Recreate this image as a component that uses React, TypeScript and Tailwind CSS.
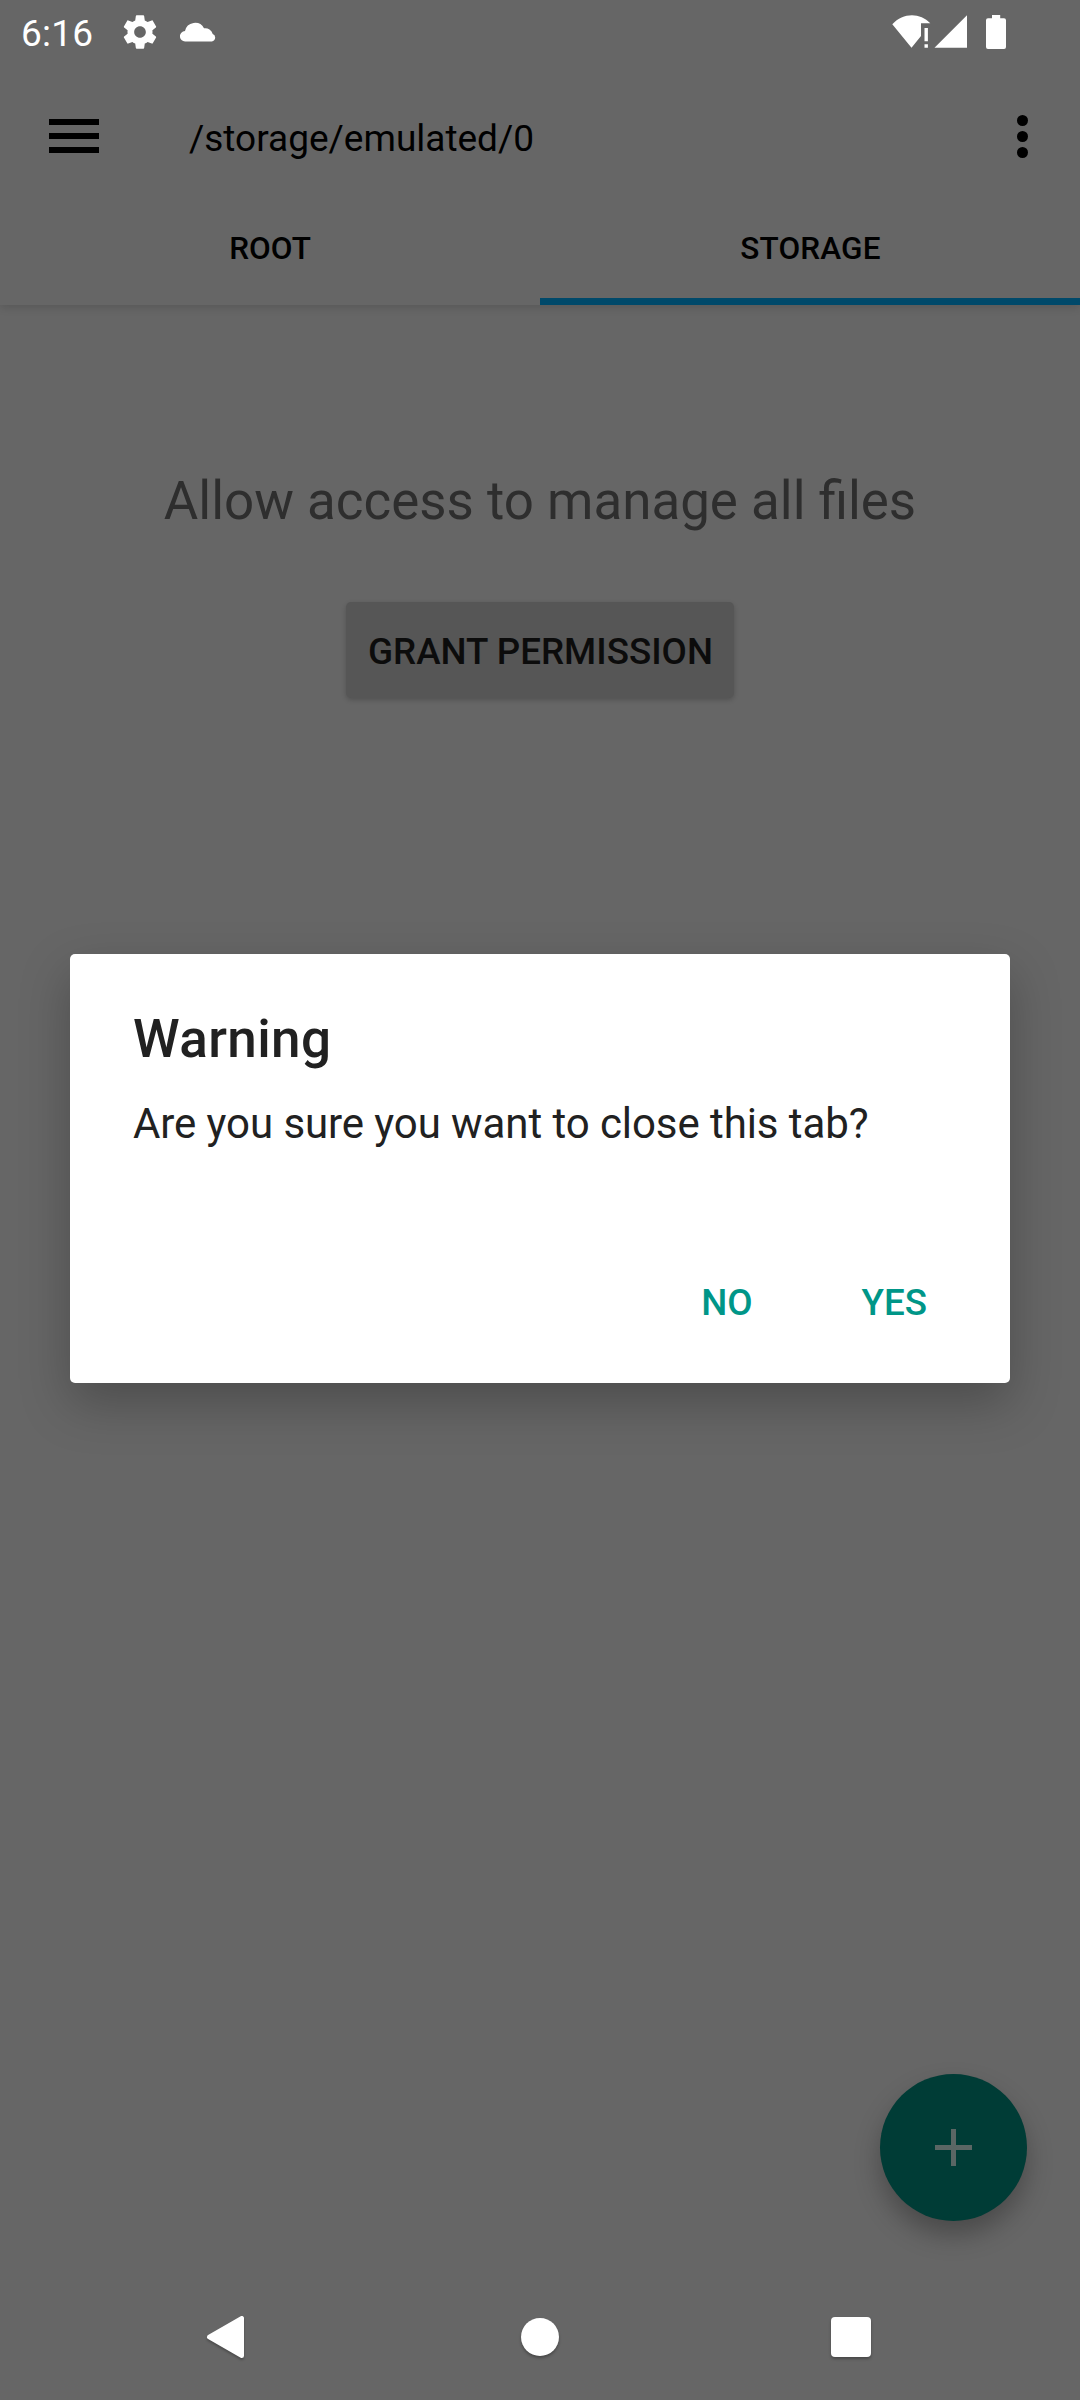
function StatusBar() {
  return (
    <div className="flex h-[63px] shrink-0 items-center justify-between pr-[73px] pl-[21px] text-white">
      <div className="flex items-center">
        <span className="w-[99px] pt-[4px] text-[37px] leading-[59px] tracking-[0.2px]">6:16</span>
        <svg className="h-[40px] w-[40px]" viewBox="0 0 24 24" fill="currentColor">
          <path d="M19.43 12.98c.04-.32.07-.64.07-.98s-.03-.66-.07-.98l2.11-1.65c.19-.15.24-.42.12-.64l-2-3.46c-.12-.22-.39-.3-.61-.22l-2.49 1c-.52-.4-1.08-.73-1.69-.98l-.38-2.65C14.46 2.18 14.25 2 14 2h-4c-.25 0-.46.18-.49.42l-.38 2.65c-.61.25-1.17.59-1.69.98l-2.49-1c-.23-.09-.49 0-.61.22l-2 3.46c-.13.22-.07.49.12.64l2.11 1.65c-.04.32-.07.65-.07.98s.03.66.07.98l-2.11 1.65c-.19.15-.24.42-.12.64l2 3.46c.12.22.39.3.61.22l2.49-1c.52.4 1.08.73 1.69.98l.38 2.65c.03.24.24.42.49.42h4c.25 0 .46-.18.49-.42l.38-2.65c.61-.25 1.17-.59 1.69-.98l2.49 1c.23.09.49 0 .61-.22l2-3.46c.12-.22.07-.49-.12-.64l-2.11-1.65zM12 15.5c-1.93 0-3.5-1.57-3.5-3.5s1.57-3.5 3.5-3.5 3.5 1.57 3.5 3.5-1.57 3.5-3.5 3.5z" />
        </svg>
        <svg className="ml-[20px] h-[20px] w-[36px]" viewBox="0 0 36 20" fill="currentColor">
          <path d="M5.200 19.500A5.200 5.200 0 0 1 5 9.100A10.200 10.200 0 0 1 24 6.300A7.500 7.500 0 0 1 32.700 12A3.900 3.900 0 0 1 31.800 19.500Z" />
        </svg>
      </div>
      <div className="flex items-center">
        <svg className="h-[34px] w-[40px]" viewBox="0 0 40 34" fill="currentColor">
          <path d="M.3 9.300C11-2.700 28-2.700 38.300 8.200H29V21L19.500 32.700Z" />
          <path d="M32.500 13h3.400v13.200h-3.400zM32.500 29.300h3.400v3.400h-3.400z" />
        </svg>
        <svg className="ml-[2px] h-[34px] w-[34px]" viewBox="0 0 34 34" fill="currentColor">
          <path d="M.5 32.700 33 .2V32.700Z" />
        </svg>
        <svg className="ml-[18px] h-[34px] w-[21px]" viewBox="0 0 21 34" fill="currentColor">
          <path d="M6 0h8.200v3.300H18a2 2 0 0 1 2 2V32a2 2 0 0 1-2 2H2a2 2 0 0 1-2-2V5.300a2 2 0 0 1 2-2h4z" />
        </svg>
      </div>
    </div>
  );
}

function Header() {
  return (
    <header className="flex h-[305px] shrink-0 flex-col shadow-[0_3px_8px_rgba(0,0,0,0.13)]">
      <StatusBar />
      <div className="flex h-[147px] shrink-0 items-center pr-[52px] pl-[49px]">
        <button className="flex w-[50px] flex-col gap-[8px] pb-[1px]">
          <span className="h-[6px] w-full bg-black" />
          <span className="h-[6px] w-full bg-black" />
          <span className="h-[6px] w-full bg-black" />
        </button>
        <span className="ml-[90px] flex-1 pt-[4px] text-[37px] leading-[44px] text-black">/storage/emulated/0</span>
        <button className="flex flex-col gap-[5px]">
          <span className="size-[11px] rounded-full bg-black" />
          <span className="size-[11px] rounded-full bg-black" />
          <span className="size-[11px] rounded-full bg-black" />
        </button>
      </div>
      <div className="grid flex-1 grid-cols-2 text-center text-[31.5px] font-medium text-black">
        <button className="pb-[17px]">ROOT</button>
        <button className="border-b-[7px] border-[#00496a] pb-[10px] pl-[1px] tracking-[0.15px]">STORAGE</button>
      </div>
    </header>
  );
}

function WarningDialog() {
  return (
    <div
      role="dialog"
      className="absolute top-[954px] left-[70px] flex h-[429px] w-[940px] flex-col rounded-[5px] bg-white px-[63px] pt-[54px] text-[#212121] shadow-[0_20px_50px_rgba(0,0,0,0.25)]"
    >
      <h2 className="text-[53px] leading-[62px] font-medium tracking-[0.4px]">Warning</h2>
      <p className="mt-[29px] text-[42px] leading-[50px] tracking-[-0.08px]">Are you sure you want to close this tab?</p>
      <div className="mt-[132px] flex justify-end gap-[109px] pr-[20px] text-[36.75px] leading-[44px] font-medium text-[#009688]">
        <button>NO</button>
        <button>YES</button>
      </div>
    </div>
  );
}

function NavigationBar() {
  return (
    <nav className="flex h-[126px] shrink-0 items-center pl-[205px] text-white">
      <svg className="h-[44px] w-[42px] drop-shadow-[0_2px_1px_rgba(0,0,0,0.25)]" viewBox="0 0 42 44" fill="currentColor">
        <path d="M36.800 3.200V40.800L4.200 22Z" stroke="currentColor" strokeWidth="4.400" strokeLinejoin="round" />
      </svg>
      <span className="ml-[274px] size-[38px] rounded-full bg-white shadow-[0_2px_3px_rgba(0,0,0,0.3)]" />
      <span className="ml-[272px] size-[40px] rounded-[4px] bg-white shadow-[0_2px_3px_rgba(0,0,0,0.3)]" />
    </nav>
  );
}

export default function App() {
  return (
    <div className="relative flex h-[2400px] w-[1080px] flex-col overflow-hidden bg-[#666666] font-['Roboto',sans-serif]">
      <Header />
      <main className="flex flex-1 flex-col items-center">
        <p className="mt-[165px] text-[52.9px] leading-[62px] text-[#2e2e2e]">Allow access to manage all files</p>
        <button className="mt-[70px] flex h-[96px] w-[388px] items-center justify-center rounded-[5px] bg-[#565656] pt-[3px] pl-[1px] text-[36.75px] font-medium text-[#0c0c0c] shadow-[0_2px_5px_rgba(0,0,0,0.2)]">
          GRANT PERMISSION
        </button>
        <button className="mt-auto mr-[53px] mb-[53px] flex size-[147px] items-center justify-center self-end rounded-full bg-[#003c36] shadow-[0_14px_26px_rgba(0,0,0,0.28)]">
          <svg className="size-[37px]" viewBox="0 0 37 37" fill="#5a6664">
            <path d="M16 0h5v16h16v5H21v16h-5V21H0v-5h16z" />
          </svg>
        </button>
      </main>
      <NavigationBar />
      <WarningDialog />
    </div>
  );
}
